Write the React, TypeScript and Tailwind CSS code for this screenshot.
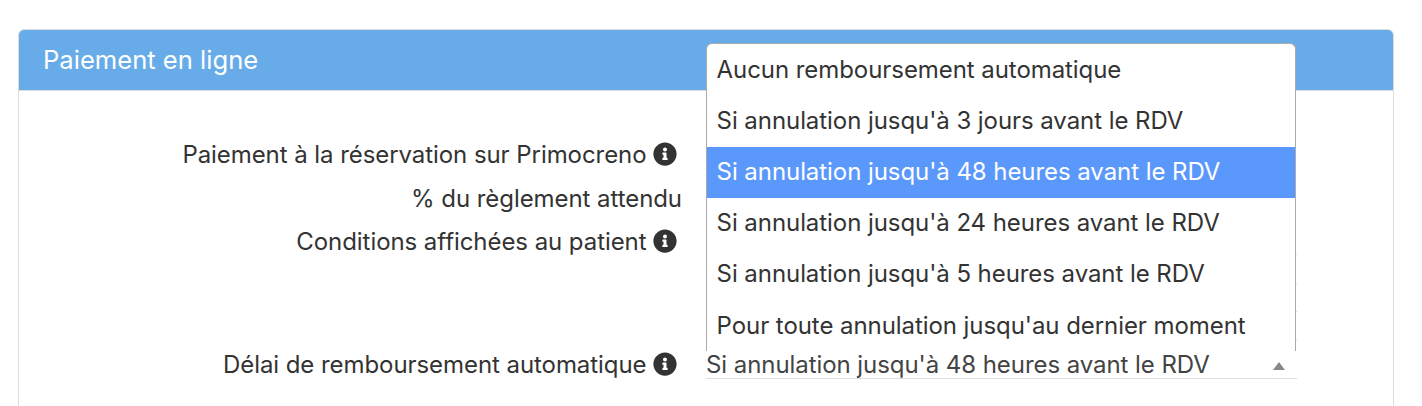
import { FaInfoCircle } from 'react-icons/fa';

const options = [
  'Aucun remboursement automatique',
  "Si annulation jusqu'à 3 jours avant le RDV",
  "Si annulation jusqu'à 48 heures avant le RDV",
  "Si annulation jusqu'à 24 heures avant le RDV",
  "Si annulation jusqu'à 5 heures avant le RDV",
  "Pour toute annulation jusqu'au dernier moment",
];

const selected = options[2];

export default function App() {
  return (
    <div className="h-[406px] overflow-hidden bg-white px-[18px] pt-[29px] font-['Inter',sans-serif] text-[24px] leading-[30px] tracking-[-0.065px] text-[#333]">
      <section className="h-[420px] w-[1376px] rounded-t-md border border-[#ddd]">
        <header className="flex h-[61px] items-center rounded-t-[5px] border-b border-[#ddd] bg-[#67ace9] pb-px pl-[24px] text-[25.6px] tracking-normal text-white">
          Paiement en ligne
        </header>
        <div className="relative flex pt-[49px]">
          <div className="flex w-[663px] flex-col items-end">
            <Label text="Paiement à la réservation sur Primocreno" info className="h-[44px]" />
            <Label text="% du règlement attendu" className="h-[43px]" />
            <Label text="Conditions affichées au patient" info className="h-[123px]" />
            <Label text="Délai de remboursement automatique" info className="h-[30px]" />
          </div>
          <div className="ml-[24px] w-[591px] pt-[86px]">
            <Lines />
            <div className="mt-[9px] flex h-[29px] items-center justify-between border-b border-[#ddd] pr-3 pt-[2px] text-[#444]">
              <span>{selected}</span>
              <span className="mt-[2px] border-x-[6px] border-b-[8px] border-x-transparent border-b-[#888]" />
            </div>
          </div>
          <ul className="absolute -top-[48px] left-[687px] h-[308px] w-[590px] overflow-hidden rounded-t-md border border-b-0 border-[#aaa] bg-white pt-[0.15px]">
            {options.map((option) => (
              <li
                key={option}
                className={`flex h-[51.19px] items-center pl-[9.6px] ${option === selected ? 'bg-[#5b98fb] text-white' : ''}`}
              >
                {option}
              </li>
            ))}
          </ul>
        </div>
      </section>
    </div>
  );
}

// Ruled lines of the conditions field, mostly covered by the open menu
function Lines() {
  return (
    <div className="flex flex-col">
      <div className="h-[29px] border-b border-[#ddd]" />
      <div className="h-[29px] border-b border-[#ddd]" />
      <div className="h-[28px] border-b border-[#ddd]" />
      <div className="h-[29px] border-b border-[#ddd]" />
    </div>
  );
}

function Label({ text, info, className }: { text: string; info?: boolean; className: string }) {
  return (
    <div className={`flex items-start whitespace-nowrap ${className}`}>
      <span>{text}</span>
      {info && <FaInfoCircle className="ml-[6.5px] mr-[5px] mt-[2px] size-[24px]" />}
    </div>
  );
}
